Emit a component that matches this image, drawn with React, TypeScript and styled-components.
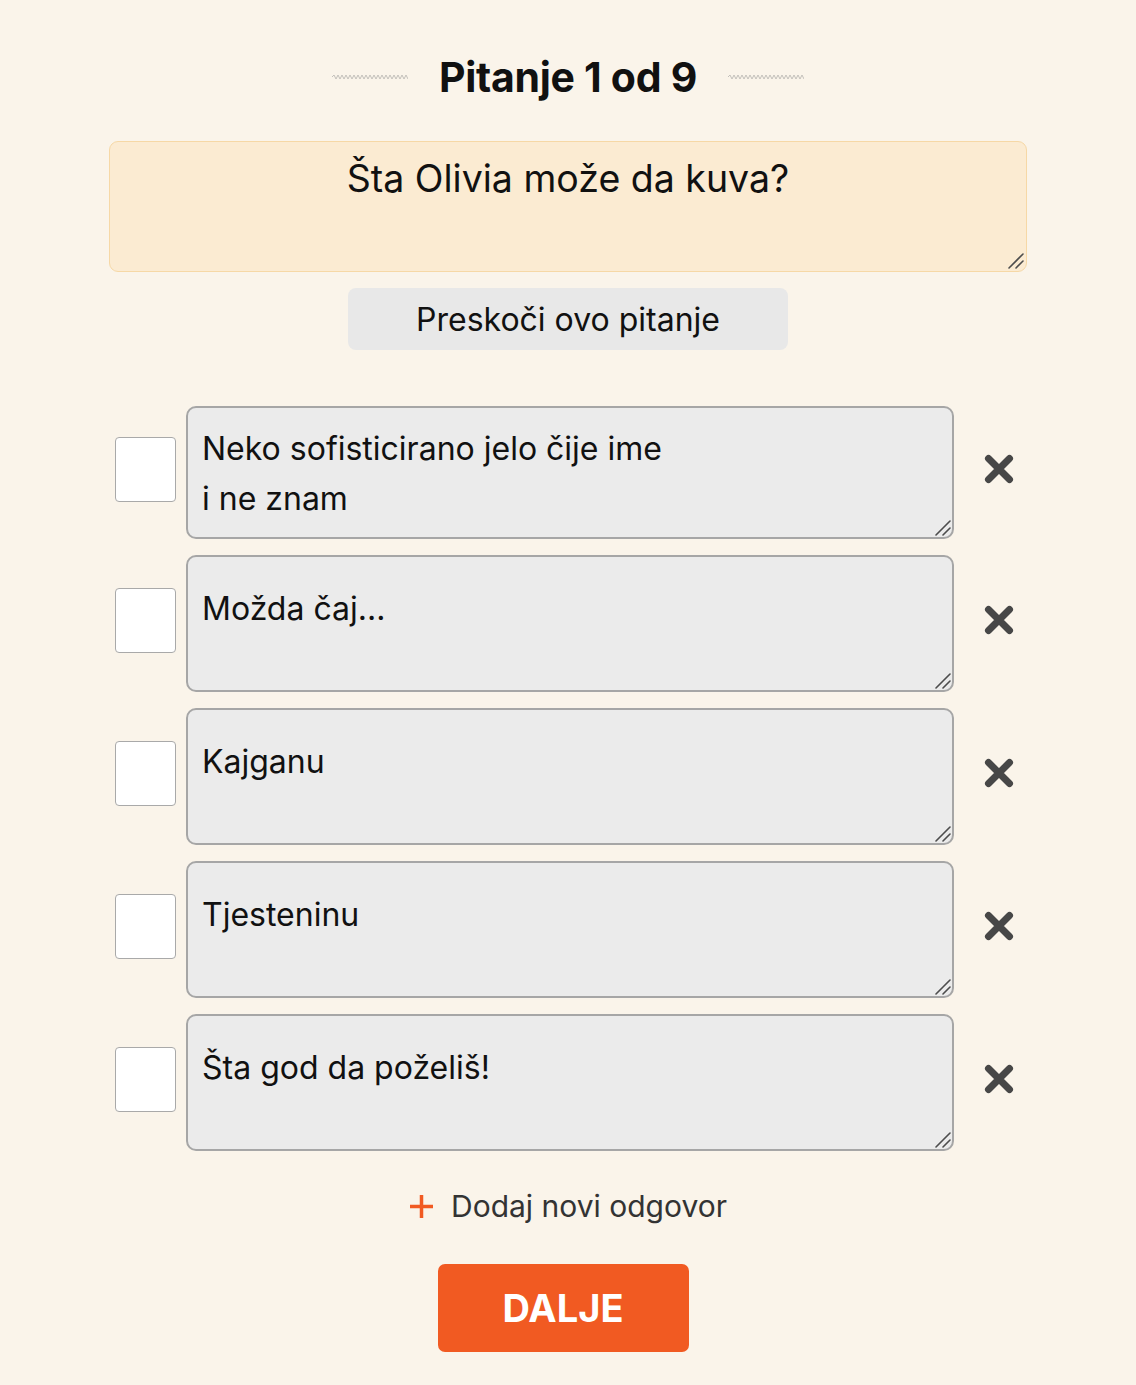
import React, { useState } from "react";
import styled, { createGlobalStyle } from "styled-components";

const GlobalStyle = createGlobalStyle`
  html, body {
    margin: 0;
    padding: 0;
    background: #faf4ea;
  }
  body {
    font-family: Inter, "Noto Sans", "Liberation Sans", sans-serif;
    color: #111;
  }
`;

const Page = styled.div`
  width: 918px;
  margin: 0 auto;
  padding: 50px 0 36px;
  display: flex;
  flex-direction: column;
  align-items: center;
`;

const TitleRow = styled.div`
  display: flex;
  align-items: center;
  gap: 31px;
  height: 54px;
`;

const Title = styled.h1`
  margin: 0;
  font-size: 41px;
  font-weight: 700;
  letter-spacing: -0.3px;
  color: #111;
`;

const Field = styled.div<{ $grow?: boolean }>`
  position: relative;
  display: flex;
  flex: ${(p) => (p.$grow ? "0 0 768px" : "none")};
`;

const Grip = styled.svg`
  position: absolute;
  right: 3px;
  bottom: 3px;
  pointer-events: none;
`;

const QuestionBox = styled.textarea`
  box-sizing: border-box;
  width: 918px;
  height: 131px;
  margin-top: 37px;
  padding: 14px 20px;
  background: #fbebd2;
  border: 1px solid #f6d8a6;
  border-radius: 9px;
  font-family: Inter, "Noto Sans", sans-serif;
  font-size: 37.5px;
  line-height: 46px;
  color: #111;
  text-align: center;
  outline: none;
  resize: vertical;
  &::-webkit-resizer {
    background: transparent;
  }
`;

const SkipButton = styled.button`
  margin-top: 16px;
  width: 440px;
  height: 62px;
  border: none;
  border-radius: 8px;
  background: #e8e8e8;
  font-family: Inter, "Noto Sans", sans-serif;
  font-size: 32px;
  color: #111;
  cursor: pointer;
`;

const Answers = styled.div`
  width: 100%;
  margin-top: 56px;
  display: flex;
  flex-direction: column;
  gap: 16px;
`;

const Row = styled.div`
  display: flex;
  align-items: center;
`;

const Check = styled.input`
  appearance: none;
  box-sizing: border-box;
  margin: 0 10px 6px 6px;
  width: 61px;
  height: 65px;
  background: #fff;
  border: 1px solid #a9a9a9;
  border-radius: 4px;
  flex-shrink: 0;
  cursor: pointer;
  &:checked {
    background: #f15a22;
    border-color: #f15a22;
  }
`;

const AnswerText = styled.textarea<{ $first?: boolean }>`
  box-sizing: border-box;
  width: 100%;
  height: ${(p) => (p.$first ? "133px" : "137px")};
  padding: ${(p) => (p.$first ? "16px" : "27px")} 14px 10px;
  background: #ebebeb;
  border: 2px solid #a6a6a6;
  border-radius: 10px;
  font-family: Inter, "Noto Sans", sans-serif;
  font-size: 32px;
  line-height: 50px;
  color: #111;
  outline: none;
  resize: vertical;
  &::-webkit-resizer {
    background: transparent;
  }
`;

const RemoveButton = styled.button`
  margin: 0 0 8px 29px;
  padding: 0;
  width: 32px;
  height: 32px;
  border: none;
  background: none;
  cursor: pointer;
  display: flex;
  align-items: center;
  justify-content: center;
`;

const AddLink = styled.button`
  margin-top: 37px;
  display: flex;
  align-items: center;
  gap: 17px;
  border: none;
  background: none;
  padding: 0;
  font-family: Inter, "Noto Sans", sans-serif;
  font-size: 30px;
  color: #333;
  cursor: pointer;
`;

const NextButton = styled.button`
  margin: 40px 10px 0 0;
  width: 251px;
  height: 88px;
  border: none;
  border-radius: 7px;
  background: #f15a22;
  color: #fff;
  font-family: Inter, "Noto Sans", sans-serif;
  font-size: 38px;
  font-weight: 700;
  cursor: pointer;
`;

const Wave = () => (
  <svg width="76" height="6" viewBox="0 0 76 6">
    <path
      d="M0 3 l2 -2 l2 4 l2 -4 l2 4 l2 -4 l2 4 l2 -4 l2 4 l2 -4 l2 4 l2 -4 l2 4 l2 -4 l2 4 l2 -4 l2 4 l2 -4 l2 4 l2 -4 l2 4 l2 -4 l2 4 l2 -4 l2 4 l2 -4 l2 4 l2 -4 l2 4 l2 -4 l2 4 l2 -4 l2 4 l2 -4 l2 4 l2 -4 l2 4 l2 -4 l2 4"
      fill="none"
      stroke="#c3c0bb"
      strokeWidth="1"
    />
  </svg>
);

const ResizeGrip = () => (
  <Grip width="17" height="17" viewBox="0 0 17 17">
    <path
      d="M2 16 L16 2 M9 16 L16 9"
      stroke="#4d4d4d"
      strokeWidth="1.6"
      strokeLinecap="round"
    />
  </Grip>
);

const CrossIcon = () => (
  <svg width="32" height="32" viewBox="0 0 32 32">
    <path
      d="M5.5 5.5 L26.5 26.5 M26.5 5.5 L5.5 26.5"
      stroke="#474747"
      strokeWidth="7"
      strokeLinecap="round"
    />
  </svg>
);

const PlusIcon = () => (
  <svg width="25" height="25" viewBox="0 0 25 25">
    <path d="M12.5 1 V24 M1 12.5 H24" stroke="#f15a22" strokeWidth="3.5" />
  </svg>
);

const initialAnswers = [
  "Neko sofisticirano jelo čije ime\ni ne znam",
  "Možda čaj...",
  "Kajganu",
  "Tjesteninu",
  "Šta god da poželiš!",
];

export default function App() {
  const [answers, setAnswers] = useState(initialAnswers);

  return (
    <>
      <GlobalStyle />
      <Page>
        <TitleRow>
          <Wave />
          <Title>Pitanje 1 od 9</Title>
          <Wave />
        </TitleRow>
        <Field>
          <QuestionBox defaultValue="Šta Olivia može da kuva?" />
          <ResizeGrip />
        </Field>
        <SkipButton>Preskoči ovo pitanje</SkipButton>
        <Answers>
          {answers.map((a, i) => (
            <Row key={i}>
              <Check type="checkbox" />
              <Field $grow>
                <AnswerText $first={i === 0} defaultValue={a} />
                <ResizeGrip />
              </Field>
              <RemoveButton
                onClick={() => setAnswers(answers.filter((_, j) => j !== i))}
              >
                <CrossIcon />
              </RemoveButton>
            </Row>
          ))}
        </Answers>
        <AddLink onClick={() => setAnswers([...answers, ""])}>
          <PlusIcon />
          Dodaj novi odgovor
        </AddLink>
        <NextButton>DALJE</NextButton>
      </Page>
    </>
  );
}
